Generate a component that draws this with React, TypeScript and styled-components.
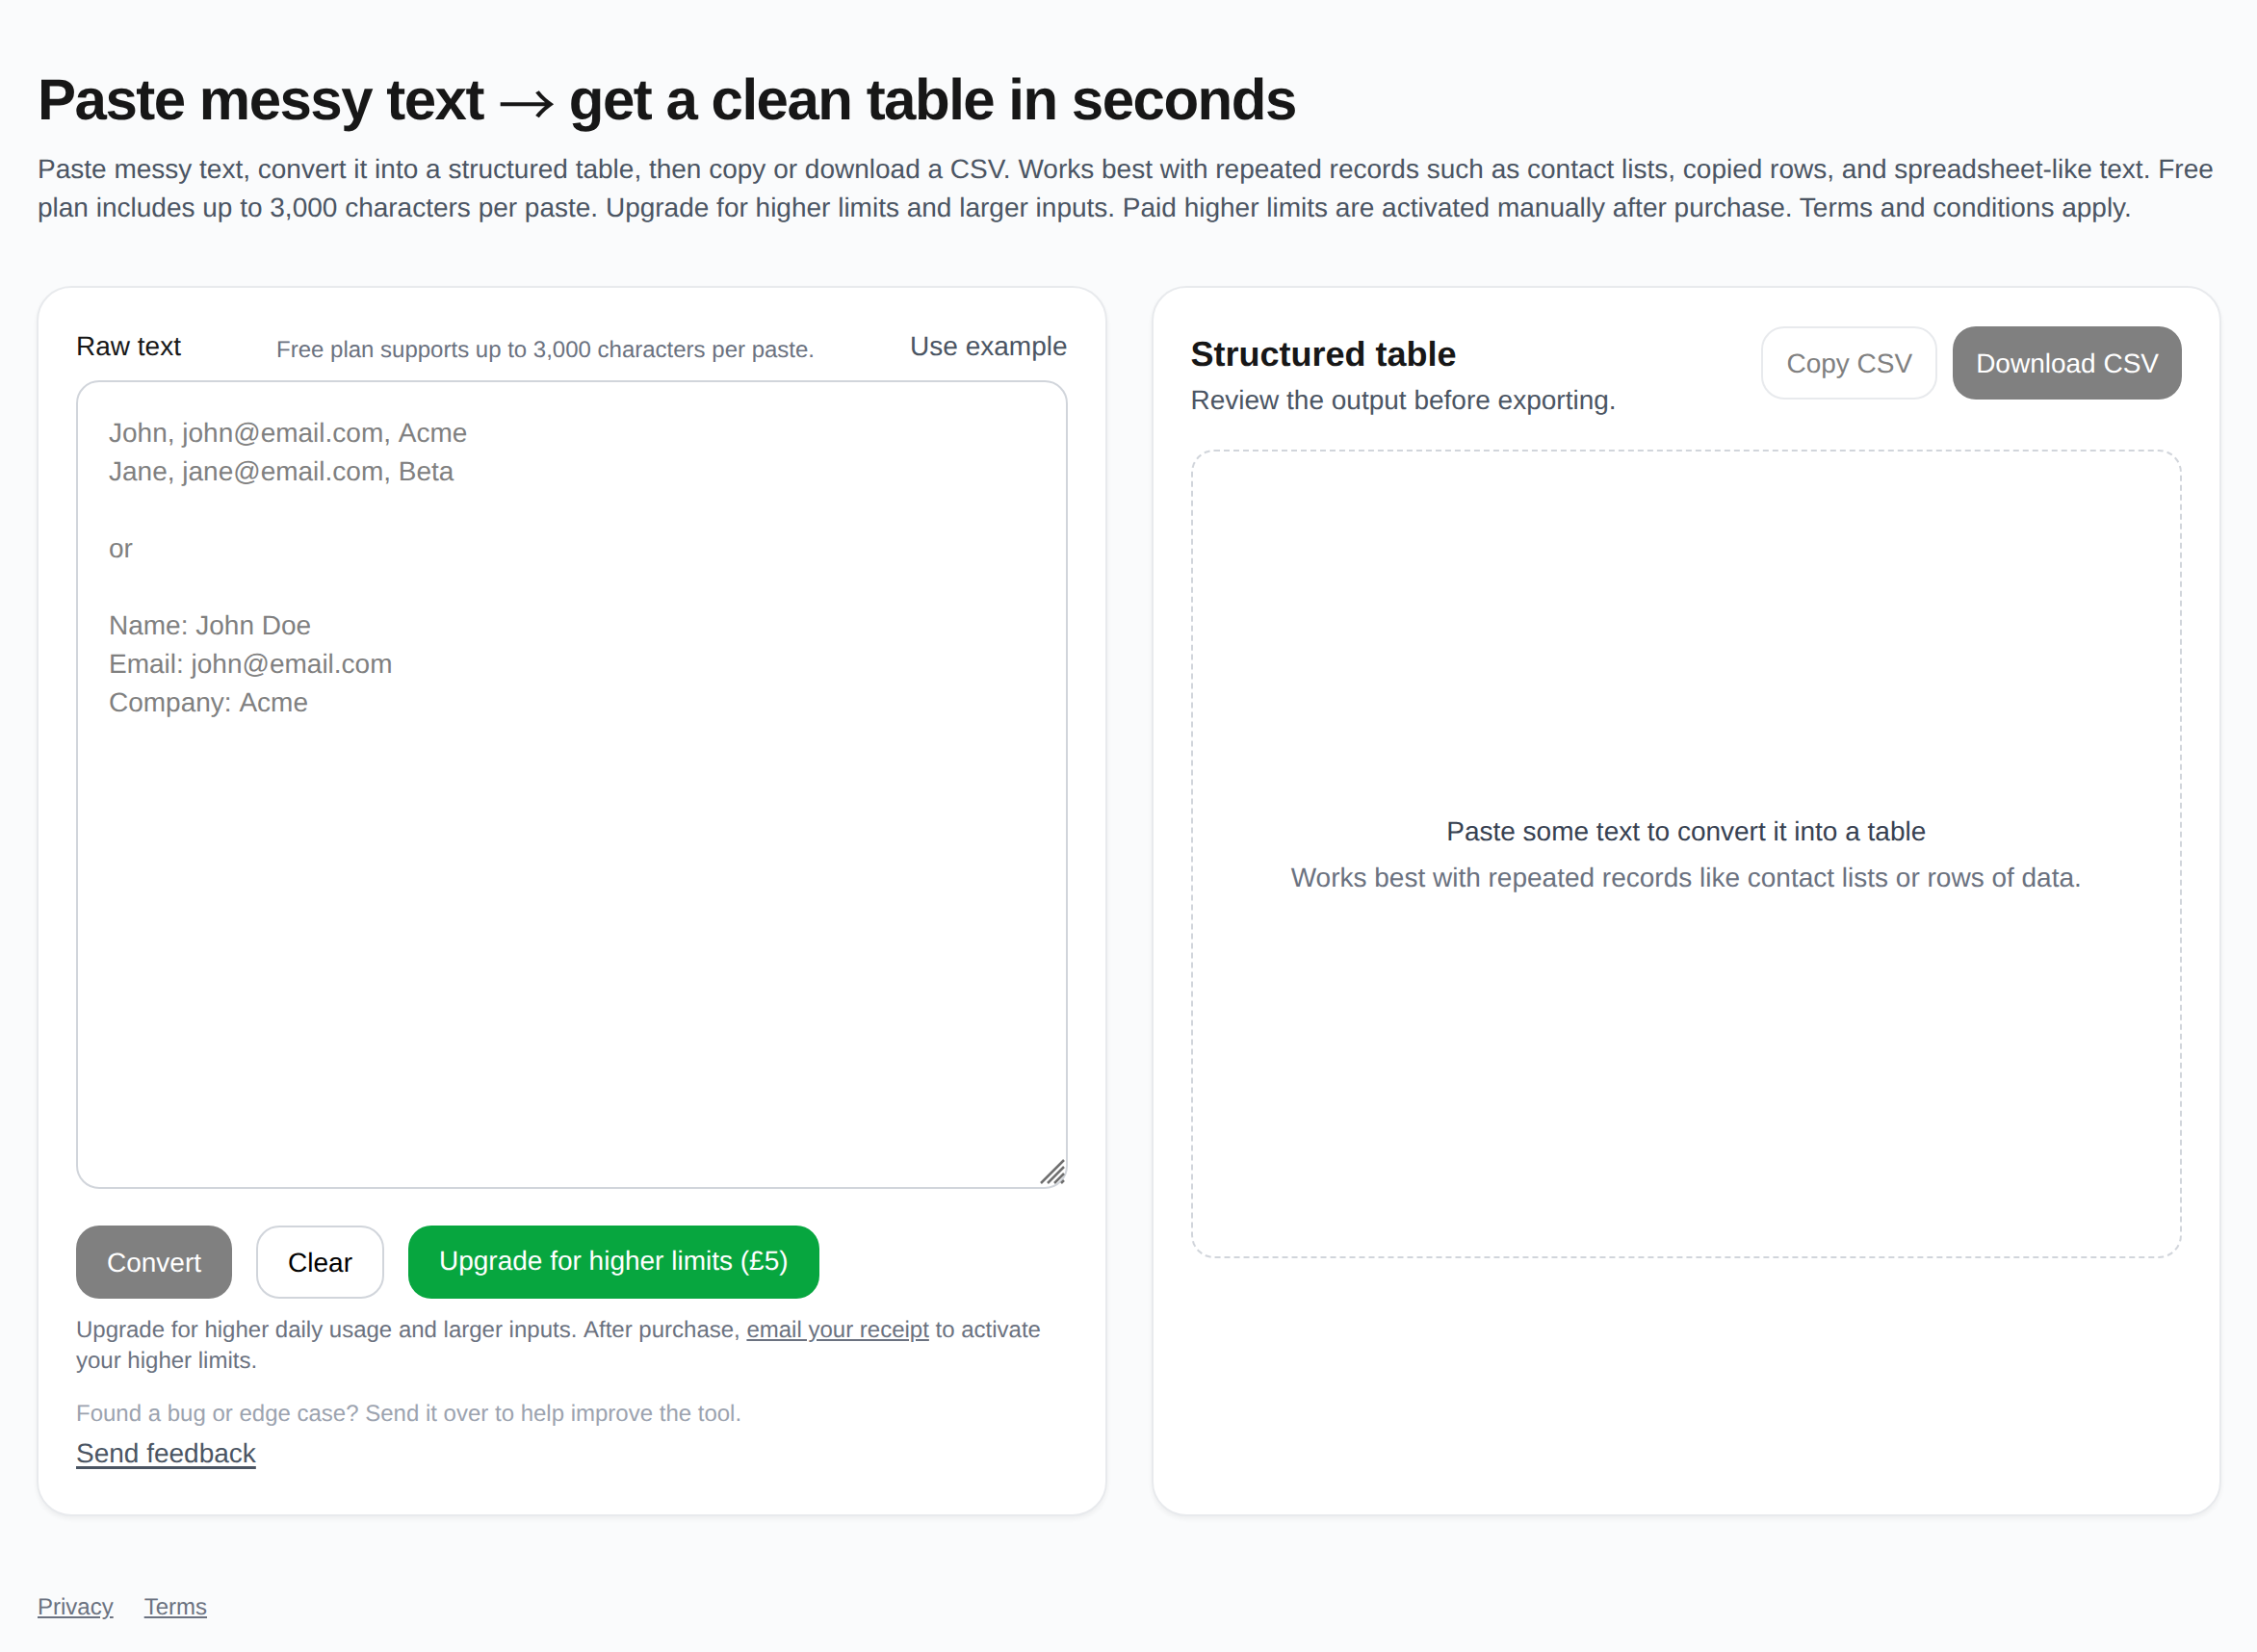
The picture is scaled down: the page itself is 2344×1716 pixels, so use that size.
import React from "react";
import styled, { createGlobalStyle } from "styled-components";

const GlobalStyle = createGlobalStyle`
  html, body {
    margin: 0;
    padding: 0;
    background: #fafbfc;
  }
  body {
    font-family: "Liberation Sans", Arial, sans-serif;
    color: #171717;
  }
  * {
    box-sizing: border-box;
    text-rendering: geometricPrecision;
  }
`;

const Page = styled.div`
  padding: 67px 37px 0 39px;
  min-height: 1716px;
`;

const Title = styled.h1`
  margin: 0;
  font-size: 60px;
  line-height: 74px;
  font-weight: 700;
  letter-spacing: -1.5px;
  color: #171717;
`;

const Arrow = styled.span`
  font-family: "Noto Sans CJK JP", "Liberation Sans", sans-serif;
  font-weight: 400;
  line-height: 0;
  vertical-align: -7px;
`;

const Intro = styled.p`
  margin: 15px 0 0;
  font-size: 28px;
  line-height: 40px;
  color: #4b5563;
`;

const Columns = styled.div`
  display: grid;
  grid-template-columns: 1fr 1fr;
  gap: 46px;
  margin-top: 61px;
  margin-left: -1px;
`;

const Card = styled.section`
  background: #fff;
  border: 2px solid #e8eaed;
  border-radius: 36px;
  padding: 38px 39px 40px;
  box-shadow: 0 3px 5px rgba(0, 0, 0, 0.05);
  height: 1278px;
`;

const RawHeader = styled.div`
  display: flex;
  align-items: flex-start;
  justify-content: space-between;
  height: 58px;
`;

const RawLabel = styled.label`
  margin-top: 7px;
  font-size: 28px;
  color: #171717;
`;

const LimitNote = styled.span`
  margin-top: 13px;
  font-size: 24px;
  color: #6b7280;
`;

const ExampleLink = styled.a`
  margin-top: 7px;
  font-size: 28px;
  color: #4b5563;
`;

const TextBox = styled.div`
  position: relative;
  height: 840px;
`;

const RawInput = styled.textarea`
  display: block;
  width: 100%;
  height: 100%;
  padding: 33px 32px;
  border: 2px solid #d1d5db;
  border-radius: 24px;
  background: #fff;
  font-family: "Liberation Sans", Arial, sans-serif;
  font-size: 28px;
  font-kerning: none;
  line-height: 40px;
  resize: none;
  outline: none;

  &::placeholder {
    color: #808080;
    opacity: 1;
  }
`;

const ResizeGrip = styled.svg`
  position: absolute;
  right: 2px;
  bottom: 3px;
  width: 28px;
  height: 28px;
`;

const ButtonRow = styled.div`
  display: flex;
  gap: 25px;
  margin-top: 38px;
`;

const Button = styled.button<{ $kind: "muted" | "plain" | "green" }>`
  height: 76px;
  padding: ${(p) => (p.$kind === "green" ? "0 32px 3px" : p.$kind === "plain" ? "2px 31px 0" : "2px 32px 0")};
  border-radius: 24px;
  font-family: "Liberation Sans", Arial, sans-serif;
  font-size: 28px;
  border: ${(p) => (p.$kind === "plain" ? "2px solid #d1d5db" : "none")};
  background: ${(p) =>
    p.$kind === "muted" ? "#808080" : p.$kind === "green" ? "#07a63f" : "#fff"};
  color: ${(p) => (p.$kind === "plain" ? "#000" : "#fff")};
`;

const UpgradeNote = styled.p`
  margin: 17px 0 0;
  font-size: 24px;
  font-kerning: none;
  line-height: 32px;
  color: #6b7280;
`;

const FeedbackNote = styled.p`
  margin: 23px 0 0;
  font-size: 24px;
  line-height: 32px;
  color: #9ca3af;
`;

const FeedbackLink = styled.a`
  display: inline-block;
  margin-top: 9px;
  font-size: 28px;
  color: #4b5563;
  text-decoration: underline;
  text-decoration-thickness: 3px;
  text-underline-offset: 4px;
`;

const ReceiptLink = styled.a`
  color: #6b7280;
  text-decoration: underline;
`;

const TableHeader = styled.div`
  display: flex;
  justify-content: space-between;
  height: 130px;
  padding-top: 2px;
`;

const TableHeading = styled.div`
  padding-top: 7px;
`;

const TableTitle = styled.h2`
  margin: 0;
  font-size: 36px;
  line-height: 44px;
  font-weight: 700;
  color: #171717;
`;

const TableSub = styled.p`
  margin: 8px 0 0;
  font-size: 28px;
  line-height: 36px;
  color: #4b5563;
`;

const ExportButtons = styled.div`
  display: flex;
  gap: 16px;
`;

const ExportButton = styled.button<{ $solid?: boolean }>`
  height: 76px;
  padding: 2px 24px 0;
  border-radius: 24px;
  font-family: "Liberation Sans", Arial, sans-serif;
  font-size: 28px;
  border: ${(p) => (p.$solid ? "none" : "2px solid #e8eaed")};
  background: ${(p) => (p.$solid ? "#808080" : "#fff")};
  color: ${(p) => (p.$solid ? "#fff" : "#808080")};
`;

const EmptyState = styled.div`
  display: flex;
  flex-direction: column;
  align-items: center;
  justify-content: center;
  height: 840px;
  padding-top: 2px;
  border: 2px dashed #d1d5db;
  border-radius: 24px;
`;

const EmptyTitle = styled.p`
  margin: 0;
  font-size: 28px;
  line-height: 40px;
  color: #374151;
`;

const EmptyHint = styled.p`
  margin: 8px 0 0;
  font-size: 28px;
  line-height: 40px;
  color: #6b7280;
`;

const Footer = styled.footer`
  display: flex;
  gap: 32px;
  margin-top: 81px;
`;

const FooterLink = styled.a`
  font-size: 24px;
  color: #6b7280;
  text-decoration: underline;
`;

const placeholder = `John, john@email.com, Acme
Jane, jane@email.com, Beta

or

Name: John Doe
Email: john@email.com
Company: Acme`;

export default function App() {
  return (
    <>
      <GlobalStyle />
      <Page>
        <Title>
          Paste messy text <Arrow>→</Arrow> get a clean table in seconds
        </Title>
        <Intro>
          Paste messy text, convert it into a structured table, then copy or download a CSV. Works best with repeated
          records such as contact lists, copied rows, and spreadsheet-like text. Free plan includes up to 3,000
          characters per paste. Upgrade for higher limits and larger inputs. Paid higher limits are activated manually
          after purchase. Terms and conditions apply.
        </Intro>
        <Columns>
          <Card>
            <RawHeader>
              <RawLabel>Raw text</RawLabel>
              <LimitNote>Free plan supports up to 3,000 characters per paste.</LimitNote>
              <ExampleLink>Use example</ExampleLink>
            </RawHeader>
            <TextBox>
              <RawInput placeholder={placeholder} />
              <ResizeGrip viewBox="0 0 28 28">
                <path d="M2 25 L26 1 M9 25 L26 8 M16 25 L26 15 M23 25 L26 22" stroke="#707070" strokeWidth="2.5" />
              </ResizeGrip>
            </TextBox>
            <ButtonRow>
              <Button $kind="muted">Convert</Button>
              <Button $kind="plain">Clear</Button>
              <Button $kind="green">Upgrade for higher limits (£5)</Button>
            </ButtonRow>
            <UpgradeNote>
              Upgrade for higher daily usage and larger inputs. After purchase, <ReceiptLink>email your receipt</ReceiptLink> to
              activate your higher limits.
            </UpgradeNote>
            <FeedbackNote>Found a bug or edge case? Send it over to help improve the tool.</FeedbackNote>
            <FeedbackLink>Send feedback</FeedbackLink>
          </Card>
          <Card>
            <TableHeader>
              <TableHeading>
                <TableTitle>Structured table</TableTitle>
                <TableSub>Review the output before exporting.</TableSub>
              </TableHeading>
              <ExportButtons>
                <ExportButton>Copy CSV</ExportButton>
                <ExportButton $solid>Download CSV</ExportButton>
              </ExportButtons>
            </TableHeader>
            <EmptyState>
              <EmptyTitle>Paste some text to convert it into a table</EmptyTitle>
              <EmptyHint>Works best with repeated records like contact lists or rows of data.</EmptyHint>
            </EmptyState>
          </Card>
        </Columns>
        <Footer>
          <FooterLink>Privacy</FooterLink>
          <FooterLink>Terms</FooterLink>
        </Footer>
      </Page>
    </>
  );
}
